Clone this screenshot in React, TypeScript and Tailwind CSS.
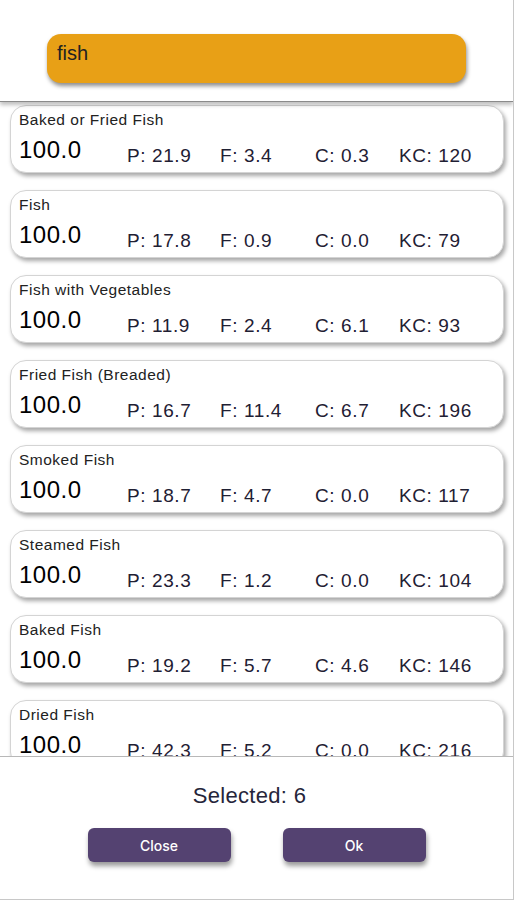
import { useState } from 'react';

type Food = {
  name: string;
  p: string;
  f: string;
  c: string;
  kc: string;
};

const foods: Food[] = [
  { name: 'Baked or Fried Fish', p: '21.9', f: '3.4', c: '0.3', kc: '120' },
  { name: 'Fish', p: '17.8', f: '0.9', c: '0.0', kc: '79' },
  { name: 'Fish with Vegetables', p: '11.9', f: '2.4', c: '6.1', kc: '93' },
  { name: 'Fried Fish (Breaded)', p: '16.7', f: '11.4', c: '6.7', kc: '196' },
  { name: 'Smoked Fish', p: '18.7', f: '4.7', c: '0.0', kc: '117' },
  { name: 'Steamed Fish', p: '23.3', f: '1.2', c: '0.0', kc: '104' },
  { name: 'Baked Fish', p: '19.2', f: '5.7', c: '4.6', kc: '146' },
  { name: 'Dried Fish', p: '42.3', f: '5.2', c: '0.0', kc: '216' },
];

function FoodCard({ food }: { food: Food }) {
  return (
    <article className="h-[68px] shrink-0 overflow-hidden rounded-2xl border border-[#d4d4d4] bg-white pl-[8px] pt-[5px] shadow-[2px_3px_4px_rgba(0,0,0,0.35)]">
      <p className="text-[15.5px] leading-[18px] tracking-[0.5px] text-[#222]">{food.name}</p>
      <div className="mt-[7px] grid grid-cols-[108px_93px_95px_84px_1fr] items-start text-[#1f2033]">
        <span className="text-[24px] leading-[28px] tracking-[0.5px] text-black">100.0</span>
        <span className="mt-[8px] text-[19px] leading-[24px] tracking-[0.6px]">P: {food.p}</span>
        <span className="mt-[8px] text-[19px] leading-[24px] tracking-[0.6px]">F: {food.f}</span>
        <span className="mt-[8px] text-[19px] leading-[24px] tracking-[0.6px]">C: {food.c}</span>
        <span className="mt-[8px] text-[19px] leading-[24px] tracking-[0.6px]">KC: {food.kc}</span>
      </div>
    </article>
  );
}

export default function App() {
  const [query, setQuery] = useState('fish');

  return (
    <div
      className="flex h-[900px] w-[514px] flex-col overflow-hidden border-r border-b border-[#c8c8c8] bg-white"
      style={{ fontFamily: '"Liberation Sans", Arial, sans-serif' }}
    >
      <header className="relative z-10 flex h-[102px] shrink-0 items-start border-b border-[#8a8a8a] bg-white pt-[34px] pl-[47px] shadow-[0_3px_4px_rgba(0,0,0,0.25)]">
        <input
          value={query}
          onChange={(e) => setQuery(e.target.value)}
          className="h-[49px] w-[419px] rounded-[14px] bg-[#e8a016] px-[10px] pb-[10px] text-[20px] text-[#222] shadow-[1px_3px_4px_rgba(0,0,0,0.45)] outline-none"
        />
      </header>

      <main className="flex min-h-0 flex-1 flex-col gap-[17px] overflow-hidden pt-[3px] pr-[9px] pl-[10px]">
        {foods.map((food) => (
          <FoodCard key={food.name} food={food} />
        ))}
      </main>

      <footer className="flex h-[143px] shrink-0 flex-col items-center border-t border-[#b8b8b8] bg-white">
        <p className="mt-[25px] pr-[14px] text-[22px] leading-[28px] tracking-[0.3px] text-[#25253a]">Selected: 6</p>
        <div className="mt-[18px] flex gap-[52px]">
          <button
            className="h-[34px] w-[143px] rounded-[6px] bg-[#544271] text-[14px] font-medium text-white shadow-[1px_4px_5px_rgba(0,0,0,0.4)]"
            style={{ fontFamily: 'Inter, sans-serif' }}
          >
            Close
          </button>
          <button
            className="h-[34px] w-[143px] rounded-[6px] bg-[#544271] text-[14px] font-medium text-white shadow-[1px_4px_5px_rgba(0,0,0,0.4)]"
            style={{ fontFamily: 'Inter, sans-serif' }}
          >
            Ok
          </button>
        </div>
      </footer>
    </div>
  );
}
